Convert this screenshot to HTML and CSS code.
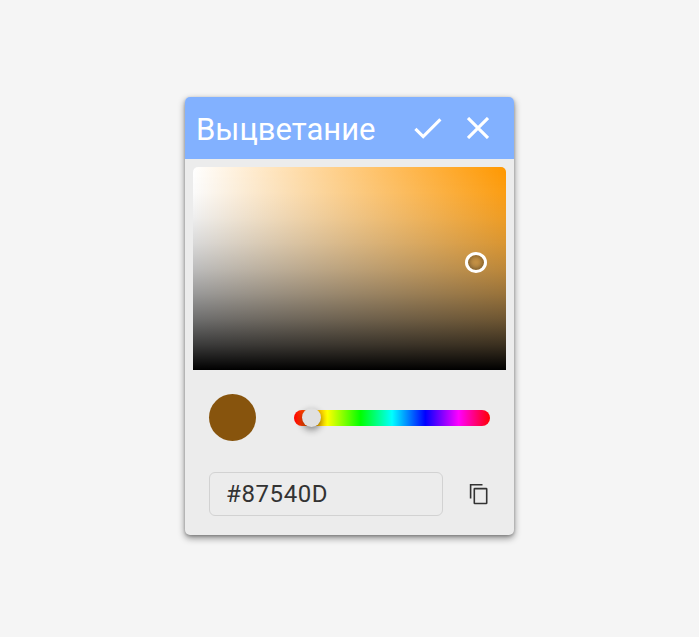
FILE: index.html
```html
<!DOCTYPE html>
<html lang="ru">
<head>
<meta charset="utf-8">
<title>Выцветание</title>
<link rel="stylesheet" href="styles.css">
</head>
<body>
<section class="picker">
  <header class="header">
    <h1 class="title">Выцветание</h1>
    <button class="action" aria-label="OK"><svg width="28" height="22" viewBox="0 0 28 22"><path d="M1.4 11.8 L9.2 19.6 L26.4 2.4" fill="none" stroke="#fff" stroke-width="3.1"/></svg></button>
    <button class="action close" aria-label="X"><svg width="22" height="22" viewBox="0 0 22 22"><path d="M1 1 L21 21 M21 1 L1 21" fill="none" stroke="#fff" stroke-width="3.1"/></svg></button>
  </header>
  <div class="palette"><span class="cursor"></span></div>
  <div class="hue-row">
    <span class="swatch"></span>
    <div class="hue"><span class="thumb"></span></div>
  </div>
  <div class="value-row">
    <input class="hex" value="#87540D">
    <button class="action copy" aria-label="Copy"><svg width="20" height="22" viewBox="0 0 20 22" fill="none" stroke="#333" stroke-width="1.6"><path d="M1.6 15.5 V1.7 H13.5"/><rect x="5.3" y="5.6" width="12.4" height="14.9" rx=".5"/></svg></button>
  </div>
</section>
</body>
</html>
```
FILE: styles.css
```css
* { box-sizing: border-box; }
body {
  margin: 0;
  height: 637px;
  padding: 97px 0 0 185px;
  background: #f5f5f5;
  font-family: Roboto, sans-serif;
}
.picker {
  width: 329px;
  height: 438px;
  border-radius: 5px;
  background: #ececec;
  box-shadow: 0 3px 7px rgba(0, 0, 0, .45), 0 1px 3px rgba(0, 0, 0, .2);
}
.header {
  display: flex;
  align-items: center;
  height: 62px;
  padding: 0 25px 0 11px;
  border-radius: 5px 5px 0 0;
  background: #82b1ff;
}
.title {
  flex: 1;
  margin: 0;
  padding-top: 3px;
  color: #fff;
  font-size: 31px;
  font-weight: 400;
  line-height: 40px;
}
.action {
  display: block;
  padding: 0;
  border: 0;
  background: none;
}
.action svg { display: block; }
.close { margin-left: 25px; }
.palette {
  position: relative;
  height: 203px;
  margin: 8px 8px 0;
  border-radius: 5px 5px 0 0;
  background:
    linear-gradient(rgba(0,0,0,0), rgba(0,0,0,.015) 12.5%, rgba(0,0,0,.065) 25%, rgba(0,0,0,.15) 37.5%, rgba(0,0,0,.26) 50%, rgba(0,0,0,.4) 62.5%, rgba(0,0,0,.57) 75%, rgba(0,0,0,.77) 87.5%, #000),
    linear-gradient(to right, #fff, rgba(255,255,255,0)),
    linear-gradient(rgba(255,255,255,0), rgba(255,255,255,.6)),
    #ff9800;
}
.cursor {
  position: absolute;
  left: 272px;
  top: 85px;
  width: 22px;
  height: 21px;
  border: 3px solid #fff;
  border-radius: 50%;
  box-shadow: inset 0 0 5px 1px rgba(0, 0, 0, .4);
}
.hue-row {
  display: flex;
  align-items: center;
  gap: 38px;
  padding: 24px 23px 0 24px;
}
.swatch {
  flex: none;
  width: 47px;
  height: 47px;
  border-radius: 50%;
  background: #87540d;
}
.hue {
  position: relative;
  flex: none;
  width: 196px;
  height: 16px;
  border-radius: 8px;
  background: linear-gradient(to right, #f00, #ff0 17%, #0f0 34%, #0ff 50%, #00f 67%, #f0f 84%, #f00);
}
.thumb {
  position: absolute;
  left: 8px;
  top: -2px;
  width: 19px;
  height: 19px;
  border-radius: 50%;
  background: #e0e0e0;
  box-shadow: 0 3px 7px rgba(0, 0, 0, .45);
}
.value-row {
  display: flex;
  align-items: center;
  gap: 26px;
  padding: 31px 24px 0;
}
.hex {
  width: 234px;
  height: 44px;
  padding: 0 16px;
  border: 1px solid #d2d2d2;
  border-radius: 6px;
  outline: 0;
  background: transparent;
  color: #333;
  font: 24px/42px Roboto, sans-serif;
  letter-spacing: .6px;
}
```
